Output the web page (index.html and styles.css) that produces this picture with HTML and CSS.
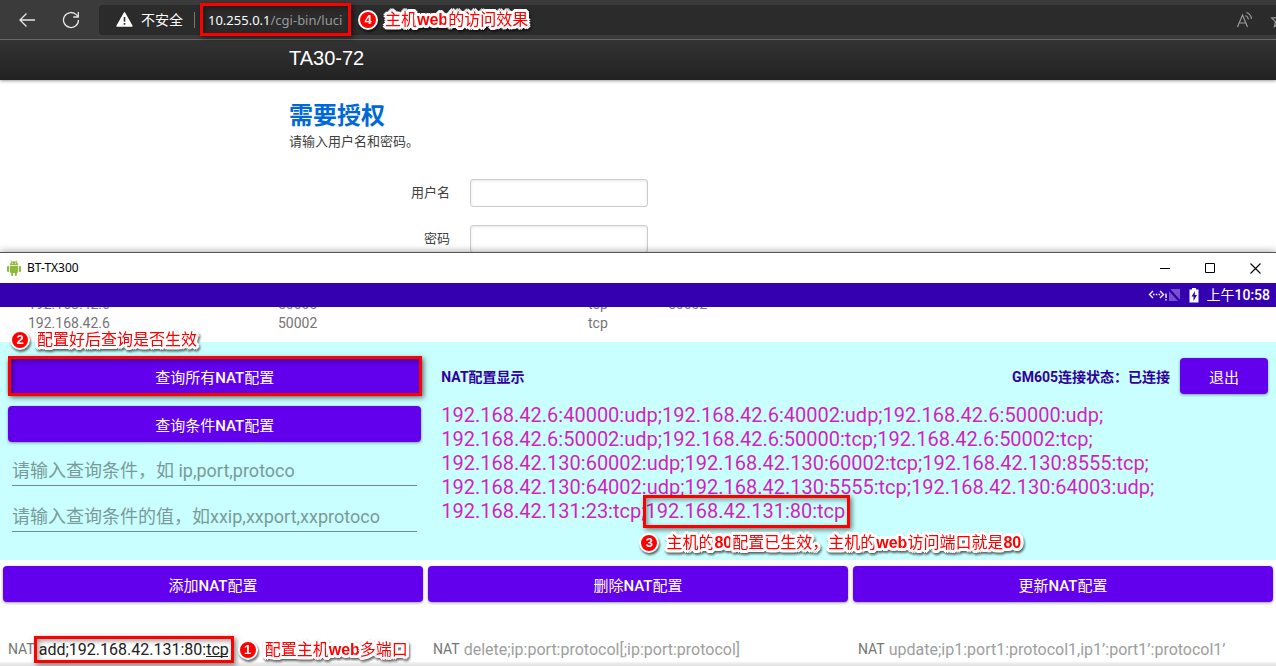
FILE: index.html
```html
<!DOCTYPE html>
<html lang="zh-CN">
<head>
<meta charset="utf-8">
<title>TA30-72</title>
<link rel="stylesheet" href="styles.css">
</head>
<body>
<section class="browser">
  <div class="toolbar">
    <button class="nav-btn" type="button" aria-label="后退">
      <svg width="18" height="18" viewBox="0 0 18 18" fill="none" stroke="#e6e6e6" stroke-width="1.3"><path d="M17 9H2M8.500 2.500L2 9l6.500 6.500"/></svg>
    </button>
    <button class="nav-btn" type="button" aria-label="刷新">
      <svg width="18" height="18" viewBox="0 0 18 18" fill="none" stroke="#e6e6e6" stroke-width="1.3"><path d="M16.500 9A7.500 7.500 0 1 1 14.500 3.900L16 5.500M16.300 1v5h-5"/></svg>
    </button>
    <div class="address">
      <svg width="17" height="15" viewBox="0 0 17 15"><path d="M8.500 .8L16 14H1z" fill="#fff" stroke="#fff" stroke-width="1.400" stroke-linejoin="round"/><path d="M8.500 5v4.700M8.500 11v1.800" stroke="#2b2b2b" stroke-width="1.600"/></svg>
      <span class="insecure">不安全</span>
      <span class="divider"></span>
      <div class="url-wrap marked">
        <span class="url">10.255.0.1<span class="path">/cgi-bin/luci</span></span>
        <span class="frame frame-url"></span>
        <div class="note note-4"><b class="num">4</b><span class="note-text">主机<b>web</b>的访问效果</span></div>
      </div>
      <div class="address-tools">
        <svg width="18" height="18" viewBox="0 0 18 18" fill="none" stroke="#9a9a9a" stroke-width="1.200"><path d="M1.500 16L6.500 4l5 12M3.200 12h6.600M9.500 4.500a5 5 0 0 1 3 4M10.500 1.500a7.500 7.500 0 0 1 5 6.500"/></svg>
        <svg width="18" height="18" viewBox="0 0 18 18" fill="none" stroke="#9a9a9a" stroke-width="1.300"><path d="M9 1.800l2.200 4.700 5 .6-3.700 3.500 1 5L9 13.200l-4.500 2.400 1-5L1.800 7.100l5-.6z"/></svg>
      </div>
    </div>
  </div>
  <header class="luci-bar"><span class="brand">TA30-72</span></header>
  <form class="login">
    <h2 class="login-title">需要授权</h2>
    <p class="login-desc">请输入用户名和密码。</p>
    <div class="field"><label for="user">用户名</label><input id="user" type="text"></div>
    <div class="field"><label for="pass">密码</label><input id="pass" type="password"></div>
  </form>
</section>

<main class="app">
  <header class="titlebar">
    <svg width="14" height="16" viewBox="0 0 14 16"><g fill="#8fb83e"><path d="M3 5a4 3.800 0 0 1 8 0zM3 5.700h8v6.300q0 1-1 1H4q-1 0-1-1z"/><rect x="0" y="6" width="2.200" height="6" rx="1.100"/><rect x="11.800" y="6" width="2.200" height="6" rx="1.100"/><rect x="4.200" y="12" width="2" height="4" rx="1"/><rect x="7.800" y="12" width="2" height="4" rx="1"/></g><path d="M4 .3l1 1.700M10 .3L9 2" stroke="#8fb83e" stroke-width=".7"/><path d="M5 3.200h1M8 3.200h1" stroke="#fff"/></svg>
    <span class="app-name">BT-TX300</span>
    <div class="window-btns">
      <button type="button" aria-label="最小化"><svg width="11" height="11" viewBox="0 0 11 11"><path d="M0 5.500h10" stroke="#000"/></svg></button>
      <button type="button" aria-label="最大化"><svg width="11" height="11" viewBox="0 0 11 11"><path d="M.5.5h9v9h-9z" fill="none" stroke="#000"/></svg></button>
      <button type="button" aria-label="关闭"><svg width="11" height="11" viewBox="0 0 11 11"><path d="M.5.5l10 10M10.500.5l-10 10" stroke="#000" stroke-width="1.100"/></svg></button>
    </div>
  </header>
  <div class="statusbar">
    <svg width="34" height="14" viewBox="0 0 34 14"><path d="M5 3L1.500 6.500 5 10M12 3l3.500 3.500L12 10" fill="none" stroke="#fff" stroke-width="1.400"/><path d="M5 6.500h1.500M7.800 6.500h1.500M10.600 6.500h1.500" stroke="#fff" stroke-width="1.500"/><path d="M18 5.500v4.500M18 11v1.500" stroke="#fff" stroke-width="1.400"/><path d="M22 1h10v11z" fill="#7750cc"/><path d="M21 3v10h9z" fill="#7750cc"/><path d="M21 1l11 12" stroke="#3400b0" stroke-width="1.200"/></svg>
    <svg width="10" height="15" viewBox="0 0 10 15"><path d="M3 0h4v1.500h2.500v13h-9v-13H3z" fill="#fff"/><path d="M6 3L2.500 8.500h2V13L8 7H5.800z" fill="#3400b0"/></svg>
    <span class="clock">上午<b>10:58</b></span>
  </div>

  <div class="rules">
    <table>
      <tr><td>192.168.42.6</td><td>50000</td><td>tcp</td><td>50002</td></tr>
      <tr><td>192.168.42.6</td><td>50002</td><td>tcp</td><td></td></tr>
    </table>
  </div>

  <section class="query">
    <div class="query-form">
      <div class="marked">
        <button class="btn" type="button">查询所有<b>NAT</b>配置</button>
        <span class="frame frame-query"></span>
        <div class="note note-2"><b class="num">2</b><span class="note-text">配置好后查询是否生效</span></div>
      </div>
      <button class="btn" type="button">查询条件<b>NAT</b>配置</button>
      <div class="lines">
        <input class="line-input" type="text" aria-label="查询条件" placeholder="请输入查询条件，如 ip,port,protoco">
        <input class="line-input" type="text" aria-label="查询条件的值" placeholder="请输入查询条件的值，如xxip,xxport,xxprotoco">
      </div>
    </div>
    <div class="result">
      <div class="result-head">
        <strong>NAT配置显示</strong>
        <strong class="state">GM605连接状态：已连接</strong>
        <button class="btn btn-exit" type="button">退出</button>
      </div>
      <p class="result-text">192.168.42.6:40000:udp;192.168.42.6:40002:udp;192.168.42.6:50000:udp;<br>192.168.42.6:50002:udp;192.168.42.6:50000:tcp;192.168.42.6:50002:tcp;<br>192.168.42.130:60002:udp;192.168.42.130:60002:tcp;192.168.42.130:8555:tcp;<br>192.168.42.130:64002:udp;192.168.42.130:5555:tcp;192.168.42.130:64003:udp;<br>192.168.42.131:23:tcp;<span class="marked">192.168.42.131:80:tcp<span class="frame frame-result"></span><span class="note note-3"><b class="num">3</b><span class="note-text">主机的<b>80</b>配置已生效，主机的<b>web</b>访问端口就是<b>80</b></span></span></span></p>
    </div>
  </section>

  <section class="actions">
    <div class="action">
      <button class="btn" type="button">添加<b>NAT</b>配置</button>
      <div class="nat-row">
        <label for="add">NAT</label>
        <div class="nat-field marked">
          <input id="add" type="text" value="add;192.168.42.131:80:tcp">
          <span class="composing"></span>
          <span class="frame frame-add"></span>
          <div class="note note-1"><b class="num">1</b><span class="note-text">配置主机<b>web</b>多端口</span></div>
        </div>
      </div>
    </div>
    <div class="action">
      <button class="btn" type="button">删除<b>NAT</b>配置</button>
      <div class="nat-row">
        <label for="del">NAT</label>
        <div class="nat-field"><input id="del" type="text" placeholder="delete;ip:port:protocol[;ip:port:protocol]"></div>
      </div>
    </div>
    <div class="action">
      <button class="btn" type="button">更新<b>NAT</b>配置</button>
      <div class="nat-row">
        <label for="upd">NAT</label>
        <div class="nat-field"><input id="upd" type="text" placeholder="update;ip1:port1:protocol1,ip1’:port1’:protocol1’"></div>
      </div>
    </div>
  </section>
  <div class="app-edge"></div>
</main>
</body>
</html>
```
FILE: styles.css
```css
* { box-sizing: border-box; }

body {
  margin: 0;
  min-height: 100vh;
  display: flex;
  flex-direction: column;
  background: #fff;
  font-family: Roboto, "Noto Sans CJK SC", sans-serif;
  overflow-x: hidden;
}

button, input { font: inherit; }
button { border: 0; padding: 0; cursor: pointer; }
svg { display: block; flex: none; }

/* browser chrome */
.toolbar {
  display: flex;
  align-items: center;
  gap: 8px;
  height: 40px;
  padding: 0 0 0 9px;
  background: #3b3b3b;
  border-bottom: 1px solid #707070;
}
.nav-btn {
  display: grid;
  place-items: center;
  flex: none;
  width: 36px;
  height: 30px;
  background: none;
}
.nav-btn + .address { margin-left: 2px; }
.address {
  display: flex;
  flex: 1;
  align-items: center;
  height: 30px;
  padding-left: 17px;
  background: #2b2b2b;
  border-radius: 4px 0 0 4px;
  color: #fff;
  font: 14px/20px "Noto Sans", "Noto Sans CJK SC", sans-serif;
}
.insecure { margin-left: 8px; }
.divider { width: 1px; height: 16px; margin: 0 13px 0 11px; background: #777; }
.url { font-size: 13px; white-space: nowrap; }
.path { color: #9a9a9a; }
.address-tools {
  display: flex;
  gap: 16px;
  margin: 0 -12px 0 auto;
}

/* router login page */
.luci-bar {
  height: 40px;
  padding-left: 289px;
  background: linear-gradient(#333, #222);
  box-shadow: 0 1px 3px rgba(0, 0, 0, .4);
}
.brand { color: #fff; font: 20px/36px "Liberation Sans", sans-serif; }
.login {
  padding: 20px 20px 0 289px;
  color: #404040;
  font: 13px/20px "Liberation Sans", "Noto Sans CJK SC", sans-serif;
}
.login-title { margin: 0; color: #0069d6; font-size: 24px; line-height: 32px; }
.login-desc { margin: 0 0 27px; }
.field { display: flex; align-items: center; gap: 20px; margin-bottom: 18px; }
.field:last-child { margin-bottom: 0; }
.field label { width: 161px; text-align: right; }
.field input {
  width: 178px;
  height: 28px;
  padding: 4px;
  border: 1px solid #ccc;
  border-radius: 3px;
  box-shadow: inset 0 1px 3px rgba(0, 0, 0, .1);
}

/* android window */
.app {
  position: relative;
  display: flex;
  flex: 1;
  flex-direction: column;
  margin-top: -1px;
  background: #fff;
  border-top: 1px solid #555;
  box-shadow: 0 0 8px rgba(0, 0, 0, .4);
}
.titlebar { display: flex; align-items: center; height: 30px; padding-left: 7px; }
.app-name { margin-left: 6px; color: #000; font: 12px/16px "Noto Sans", sans-serif; }
.window-btns { display: flex; gap: 3px; margin-left: auto; }
.window-btns button {
  display: grid;
  place-items: center;
  width: 42px;
  height: 30px;
  background: none;
}
.statusbar {
  display: flex;
  align-items: center;
  justify-content: flex-end;
  gap: 7px;
  height: 24px;
  padding-right: 6px;
  background: #3400b0;
  color: #fff;
}
.clock { font-size: 14px; line-height: 24px; }
.clock b { font-weight: 500; }

.rules {
  display: flex;
  flex-direction: column;
  justify-content: flex-end;
  height: 35px;
  padding: 0 28px 9px;
  overflow: hidden;
  color: #757575;
  font-size: 14px;
  line-height: 19px;
}
.rules table { width: 100%; table-layout: fixed; border-spacing: 0; }
.rules td { padding: 0; height: 19px; }
.rules td:nth-child(1) { width: 250px; }
.rules td:nth-child(2) { width: 310px; }
.rules td:nth-child(3) { width: 80px; }

.btn {
  display: block;
  width: 100%;
  height: 36px;
  background: #6200ee;
  border-radius: 4px;
  box-shadow: 0 1px 3px rgba(0, 0, 0, .4);
  color: #fff;
  font-size: 15px;
}
.btn b { font-weight: 500; }

.query {
  display: grid;
  grid-template-columns: 1fr 2fr;
  gap: 20px;
  padding: 16px 8px 28px;
  background: #c9fffe;
}
.query-form { display: flex; flex-direction: column; gap: 12px; }
.lines { display: flex; flex-direction: column; gap: 15px; padding: 1px 4px 0; }
.line-input {
  width: 100%;
  height: 31px;
  padding: 0;
  background: none;
  border: 0;
  border-bottom: 1px solid #6d8c8b;
  border-radius: 0;
  font-size: 18px;
}
.line-input::placeholder { color: #7a9a9a; }

.result-head {
  display: flex;
  align-items: center;
  gap: 10px;
  margin-bottom: 9px;
  color: #30009c;
  font-size: 14px;
}
.state { margin-left: auto; }
.btn-exit { width: 88px; }
.result-text { margin: 0; color: #d41fc0; font-size: 20px; line-height: 24px; }

.actions {
  display: grid;
  grid-template-columns: repeat(3, 1fr);
  gap: 5px;
  padding: 6px 3px 0;
}
.nat-row {
  display: flex;
  align-items: center;
  gap: 4px;
  margin-top: 34px;
  padding-left: 5px;
  color: #757575;
  font-size: 14px;
}
.nat-field { flex: 1; }
.nat-field input {
  display: block;
  width: 100%;
  height: 26px;
  padding: 0;
  background: none;
  border: 0;
  color: #212121;
  font-size: 16px;
}
.nat-field input::placeholder { color: #9e9e9e; }
.composing {
  position: absolute;
  top: 20px;
  left: 167px;
  width: 22px;
  height: 1px;
  background: #212121;
}
.app-edge { height: 4px; margin-top: auto; background: linear-gradient(#f4f4f4, #dedede); }

/* callouts drawn over the screens */
.marked { position: relative; }
.frame {
  position: absolute;
  z-index: 2;
  border: 3px solid #f00;
  box-shadow: 2px 2px 5px rgba(0, 0, 0, .5), inset 2px 2px 5px rgba(0, 0, 0, .4);
  pointer-events: none;
}
.frame-url { inset: -7px -9px -6px -8px; }
.frame-query { inset: -2px -1px -2px 0; }
.frame-result { inset: -4px -5px -5px -2px; }
.frame-add { top: 0; left: -5px; width: 200px; height: 27px; }
.note {
  position: absolute;
  z-index: 3;
  display: flex;
  align-items: center;
  gap: 7px;
  color: #f00;
  font: 16px/20px "Liberation Sans", "Noto Sans CJK SC", sans-serif;
  white-space: nowrap;
  filter: drop-shadow(1px 2px 1px rgba(0, 0, 0, .6));
}
.note-text {
  text-shadow: 2px 0 #fff, -2px 0 #fff, 0 2px #fff, 0 -2px #fff,
    2px 2px #fff, -2px 2px #fff, 2px -2px #fff, -2px -2px #fff,
    3px 1px #fff, -3px 1px #fff, 3px -1px #fff, -3px -1px #fff,
    1px 3px #fff, -1px 3px #fff, 1px -3px #fff, -1px -3px #fff;
}
.num {
  display: grid;
  place-items: center;
  width: 20px;
  height: 20px;
  background: #f00;
  border: 2px solid #fff;
  border-radius: 50%;
  color: #fff;
  font-size: 13px;
  line-height: 16px;
}
.note-4 { top: 0; left: 150px; }
.note-2 { top: -28px; left: 2px; }
.note-3 { top: 34px; left: -6px; }
.note-1 { top: 4px; left: 199px; }
```
